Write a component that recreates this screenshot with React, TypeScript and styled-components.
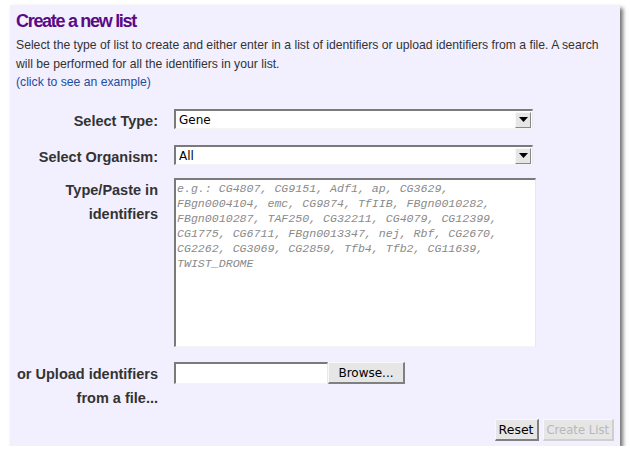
import React from "react";
import styled, { createGlobalStyle } from "styled-components";

const Global = createGlobalStyle`
  html, body { margin: 0; padding: 0; background: #ffffff; }
  body { font-family: "Liberation Sans", Arial, sans-serif; }
`;

const Page = styled.div`
  padding: 5px 10px 0 10px;
  width: 630px;
  box-sizing: border-box;
`;

const Panel = styled.div`
  width: 610px;
  height: 441px;
  box-sizing: border-box;
  background: #f2effe;
  box-shadow: 3px 3px 4px rgba(0, 0, 0, 0.55);
  padding: 4px 6px 0 6px;
  display: flex;
  flex-direction: column;
`;

const Title = styled.h1`
  margin: 0;
  font-family: "Liberation Sans", Arial, sans-serif;
  font-size: 18px;
  letter-spacing: -1.3px;
  line-height: 24px;
  font-weight: bold;
  color: #5a0a86;
`;

const Intro = styled.p`
  margin: 3px 0 0 0;
  font-size: 12.2px;
  line-height: 18.5px;
  color: #333333;
`;

const ExampleLink = styled.a`
  display: block;
  font-size: 12.2px;
  line-height: 18px;
  color: #1d4d9e;
  text-decoration: none;
  cursor: pointer;
`;

const Form = styled.div`
  margin-top: 18px;
  display: grid;
  grid-template-columns: 142px auto;
  column-gap: 16px;
  align-items: start;
`;

const Label = styled.div<{ $top?: number }>`
  text-align: right;
  font-size: 14.5px;
  font-weight: bold;
  color: #333333;
  line-height: 24px;
  padding-top: ${(p) => p.$top ?? 0}px;
`;

const Field = styled.div<{ $gap: number }>`
  margin-bottom: ${(p) => p.$gap}px;
  display: flex;
  align-items: flex-start;
`;

const SelectBox = styled.div`
  width: 359px;
  height: 20px;
  box-sizing: border-box;
  background: #ffffff;
  border-top: 2px solid #7a7a7a;
  border-left: 2px solid #7a7a7a;
  border-right: 1px solid #e8e8e8;
  border-bottom: 1px solid #f4f4f4;
  display: flex;
  align-items: center;
  justify-content: space-between;
  font-family: "DejaVu Sans", Verdana, sans-serif;
  font-size: 12px;
  color: #000;
  padding-left: 3px;
`;

const Arrow = styled.div`
  width: 16px;
  height: 16px;
  margin-right: 1px;
  box-sizing: border-box;
  background: #e6e6e6;
  border-top: 1px solid #f8f8f8;
  border-left: 1px solid #f8f8f8;
  border-right: 1px solid #888;
  border-bottom: 1px solid #888;
  display: flex;
  align-items: center;
  justify-content: center;
`;

const TextArea = styled.div`
  width: 362px;
  height: 169px;
  box-sizing: border-box;
  background: #ffffff;
  border-top: 2px solid #7a7a7a;
  border-left: 2px solid #7a7a7a;
  border-right: 1px solid #e8e8e8;
  border-bottom: 1px solid #f4f4f4;
  padding: 1px 0 0 1px;
  font-family: "Liberation Mono", "Courier New", monospace;
  font-style: italic;
  font-size: 11.6px;
  line-height: 15px;
  color: #8a8a8a;
  white-space: pre;
`;

const FileInput = styled.div`
  width: 154px;
  height: 22px;
  box-sizing: border-box;
  background: #ffffff;
  border-top: 2px solid #7a7a7a;
  border-left: 2px solid #7a7a7a;
  border-right: 1px solid #e8e8e8;
  border-bottom: 1px solid #f4f4f4;
`;

const Button = styled.button<{ $disabled?: boolean }>`
  height: 22px;
  box-sizing: border-box;
  margin: 0;
  padding: 0 3px;
  background: #e6e6e6;
  border-top: 1px solid #f8f8f8;
  border-left: 1px solid #f8f8f8;
  border-right: 2px solid #808080;
  border-bottom: 2px solid #808080;
  font-family: "DejaVu Sans", Verdana, sans-serif;
  font-size: ${(p) => (p.$disabled ? "11.6px" : "12.5px")};
  color: ${(p) => (p.$disabled ? "#b8b8b8" : "#000")};
  ${(p) => (p.$disabled ? "border-right-color: #cfcfcf; border-bottom-color: #cfcfcf;" : "")}
`;

const BrowseButton = styled(Button)`
  width: 77px;
  font-size: 12px;
`;

const Actions = styled.div`
  margin-top: auto;
  margin-bottom: 5px;
  display: flex;
  justify-content: flex-end;
  gap: 4px;
`;

const placeholder = `e.g.: CG4807, CG9151, Adf1, ap, CG3629,
FBgn0004104, emc, CG9874, TfIIB, FBgn0010282,
FBgn0010287, TAF250, CG32211, CG4079, CG12399,
CG1775, CG6711, FBgn0013347, nej, Rbf, CG2670,
CG2262, CG3069, CG2859, Tfb4, Tfb2, CG11639,
TWIST_DROME`;

const DownArrow = () => (
  <svg width="9" height="5" viewBox="0 0 9 5">
    <polygon points="0,0 9,0 4.5,5" fill="#000" />
  </svg>
);

export default function App() {
  return (
    <Page>
      <Global />
      <Panel>
        <Title>Create a new list</Title>
        <Intro>
          Select the type of list to create and either enter in a list of identifiers or upload identifiers from a file. A search
          will be performed for all the identifiers in your list.
          <ExampleLink>(click to see an example)</ExampleLink>
        </Intro>
        <Form>
          <Label $top={-2}>Select Type:</Label>
          <Field $gap={16}>
            <SelectBox>
              Gene
              <Arrow>
                <DownArrow />
              </Arrow>
            </SelectBox>
          </Field>
          <Label $top={-2}>Select Organism:</Label>
          <Field $gap={13}>
            <SelectBox>
              All
              <Arrow>
                <DownArrow />
              </Arrow>
            </SelectBox>
          </Field>
          <Label $top={-1}>
            Type/Paste in
            <br />
            identifiers
          </Label>
          <Field $gap={15}>
            <TextArea>{placeholder}</TextArea>
          </Field>
          <Label $top={0}>
            or Upload identifiers
            <br />
            from a file...
          </Label>
          <Field $gap={0}>
            <FileInput />
            <BrowseButton>Browse...</BrowseButton>
          </Field>
        </Form>
        <Actions>
          <Button>Reset</Button>
          <Button $disabled>Create List</Button>
        </Actions>
      </Panel>
    </Page>
  );
}
